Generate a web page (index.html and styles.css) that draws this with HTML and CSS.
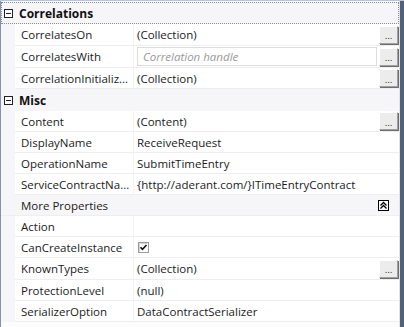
FILE: index.html
```html
<!DOCTYPE html>
<html lang="en">
<head>
  <meta charset="UTF-8">
  <title>Properties</title>
  <link rel="stylesheet" href="styles.css">
</head>
<body>
  <div class="window">
    <div class="grid">
      <!-- Correlations -->
      <div class="category focused">
        <svg class="toggle" width="9" height="9" viewBox="0 0 9 9"><rect x="0.5" y="0.5" width="8" height="8" fill="#fff" stroke="#222"/><path d="M2 4.5h5" stroke="#222"/></svg>
        Correlations
      </div>
      <div class="prop tall">
        <div class="gutter"></div>
        <div class="name">CorrelatesOn</div>
        <div class="value">(Collection)<button class="dots">...</button></div>
      </div>
      <div class="prop tall">
        <div class="gutter"></div>
        <div class="name">CorrelatesWith</div>
        <div class="value"><input class="field" type="text" placeholder="Correlation handle"><button class="dots">...</button></div>
      </div>
      <div class="prop">
        <div class="gutter"></div>
        <div class="name">CorrelationInitializ...</div>
        <div class="value">(Collection)<button class="dots">...</button></div>
      </div>

      <!-- Misc -->
      <div class="category">
        <svg class="toggle" width="9" height="9" viewBox="0 0 9 9"><rect x="0.5" y="0.5" width="8" height="8" fill="#fff" stroke="#222"/><path d="M2 4.5h5" stroke="#222"/></svg>
        Misc
      </div>
      <div class="prop">
        <div class="gutter"></div>
        <div class="name">Content</div>
        <div class="value">(Content)<button class="dots">...</button></div>
      </div>
      <div class="prop">
        <div class="gutter"></div>
        <div class="name">DisplayName</div>
        <div class="value">ReceiveRequest</div>
      </div>
      <div class="prop">
        <div class="gutter"></div>
        <div class="name">OperationName</div>
        <div class="value">SubmitTimeEntry</div>
      </div>
      <div class="prop">
        <div class="gutter"></div>
        <div class="name">ServiceContractNa...</div>
        <div class="value">{http://aderant.com/}ITimeEntryContract</div>
      </div>

      <!-- More Properties -->
      <div class="more">
        More Properties
        <svg class="collapse" width="11" height="11" viewBox="0 0 11 11"><rect x="0.5" y="0.5" width="10" height="10" fill="#fff" stroke="#000"/><path d="M2.5 5.5l3-3 3 3M2.5 8.5l3-3 3 3" fill="none" stroke="#000" stroke-width="1.3"/></svg>
      </div>
      <div class="prop">
        <div class="gutter"></div>
        <div class="name">Action</div>
        <div class="value"></div>
      </div>
      <div class="prop">
        <div class="gutter"></div>
        <div class="name">CanCreateInstance</div>
        <div class="value">
          <svg class="check" width="11" height="11" viewBox="0 0 11 11"><rect x="0.5" y="0.5" width="10" height="10" fill="#fff" stroke="#9a9a9a"/><path d="M1.5 1.5h8M1.5 1.5v8" stroke="#d4d4d4"/><path d="M2.5 5.2l2 2.2 4-4.4" fill="none" stroke="#111" stroke-width="1.6"/></svg>
        </div>
      </div>
      <div class="prop tall">
        <div class="gutter"></div>
        <div class="name">KnownTypes</div>
        <div class="value">(Collection)<button class="dots">...</button></div>
      </div>
      <div class="prop">
        <div class="gutter"></div>
        <div class="name">ProtectionLevel</div>
        <div class="value">(null)</div>
      </div>
      <div class="prop">
        <div class="gutter"></div>
        <div class="name">SerializerOption</div>
        <div class="value">DataContractSerializer</div>
      </div>
    </div>
    <div class="edge"></div>
  </div>
</body>
</html>
```

FILE: styles.css
```css
body {
  margin: 0;
  padding: 0;
  width: 404px;
  height: 327px;
  overflow: hidden;
  background: #fcfcfd;
  font-family: 'Open Sans', sans-serif;
  font-size: 11.5px;
  color: #1b1b1b;
}
.window {
  display: flex;
  height: 327px;
  border-top: 1px solid #b9c6d8;
  box-sizing: border-box;
}
.grid {
  flex: 1;
  border-left: 1px solid #8294ac;
  border-right: 1px solid #dfe3ea;
  padding-top: 1px;
  background: #fcfcfd;
}
.edge {
  width: 4px;
  background: #4f627d;
}
.category {
  height: 22px;
  display: flex;
  align-items: center;
  gap: 6px;
  padding-left: 3px;
  font-weight: bold;
  font-size: 12px;
  color: #111;
  background: #f6f6f8;
  box-sizing: border-box;
}
.category.focused {
  border: 1px dotted #8c8c8c;
  padding-left: 2px;
}
.toggle {
  flex: none;
}
.prop {
  display: flex;
  height: 21px;
}
.prop.tall {
  height: 22px;
}
.gutter {
  width: 14px;
  background: #f6f6f8;
}
.name,
.value {
  display: flex;
  align-items: center;
  border-bottom: 1px solid #eeeeef;
  background: #fff;
}
.name {
  width: 112px;
  padding-left: 6px;
  border-right: 1px solid #f3f3f3;
  white-space: nowrap;
  overflow: hidden;
}
.value {
  flex: 1;
  padding-left: 3px;
  white-space: nowrap;
}
.field {
  flex: 1;
  height: 19px;
  margin: 0 2px 0 0;
  padding: 0 5px;
  border: 1px solid #dcdcdc;
  font-family: inherit;
  font-size: 11.5px;
  box-sizing: border-box;
}
.field::placeholder {
  color: #9a9a9a;
  font-style: italic;
}
.dots {
  margin-left: auto;
  width: 19px;
  height: 18px;
  padding: 5px 0 0;
  border: 1px solid;
  border-color: #fff #a0a0a0 #a0a0a0 #fff;
  box-shadow: 1px 1px 0 #6e6e6e;
  background: #ececec;
  font-family: 'DejaVu Sans', sans-serif;
  font-size: 8px;
  line-height: 8px;
  color: #222;
  box-sizing: border-box;
  margin-right: 1px;
}
.more {
  height: 21px;
  display: flex;
  align-items: center;
  padding-left: 20px;
  padding-right: 10px;
  background: #f6f6f8;
  border-bottom: 1px solid #eeeeef;
  box-sizing: border-box;
}
.collapse {
  margin-left: auto;
}
.check {
  margin-left: 1px;
}
```
